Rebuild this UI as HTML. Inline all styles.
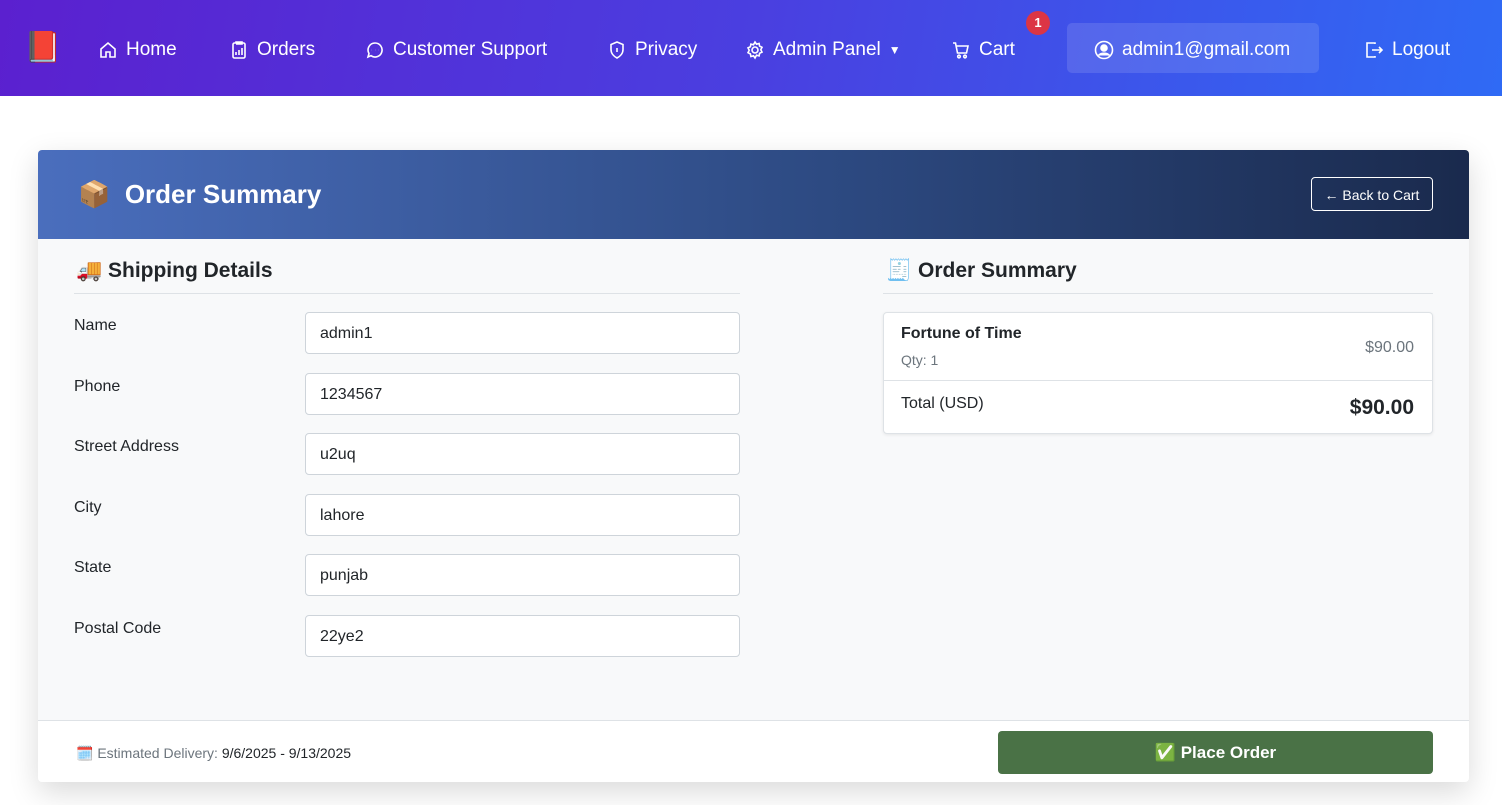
<!DOCTYPE html>
<html><head><meta charset="utf-8"><style>
*{box-sizing:border-box;margin:0;padding:0}
body{width:1502px;height:805px;overflow:hidden;background:#fff;font-family:"Liberation Sans",sans-serif;color:#212529;position:relative}
.nav{position:absolute;left:0;top:0;width:1502px;height:96px;background:linear-gradient(100deg,#5b20cf 0%,#4a3fe0 50%,#2f6af5 100%);color:#fff}
.ni{position:absolute;top:39px;font-size:19px;display:flex;align-items:center;gap:8px;white-space:nowrap}
.ni svg{width:20px;height:20px;fill:none;stroke:#fff;stroke-width:1.6}
.badge{position:absolute;left:1026px;top:11px;width:24px;height:24px;border-radius:12px;background:#dc3545;color:#fff;font-size:13px;font-weight:bold;text-align:center;line-height:24px}
.user{position:absolute;left:1067px;top:23px;width:252px;height:50px;border-radius:5px;background:rgba(255,255,255,.12)}
.card{position:absolute;left:38px;top:150px;width:1431px;height:632px;background:#f8f9fa;border-radius:4px;box-shadow:0 10px 30px rgba(0,0,0,.15);overflow:hidden}
.hd{position:absolute;left:0;top:0;width:1431px;height:89px;background:linear-gradient(90deg,#4a6ebd 0%,#2d4a82 55%,#1a2a4d 100%)}
.hd h1{position:absolute;left:40px;top:29px;font-size:26px;color:#fff;font-weight:bold}
.back{position:absolute;left:1273px;top:27px;width:122px;height:34px;border:1px solid #fff;border-radius:4px;color:#fff;font-size:14px;text-align:center;line-height:34px}
h2{position:absolute;font-size:21px;font-weight:bold;color:#212529}
.hr{position:absolute;height:1px;background:#dee2e6}
.lbl{position:absolute;left:36px;font-size:16px}
.in{position:absolute;left:267px;width:435px;height:42px;background:#fff;border:1px solid #ced4da;border-radius:4px;font-size:16px;padding:12px 14px}
.box{position:absolute;left:845px;top:162px;width:550px;height:122px;background:#fff;border:1px solid #dee2e6;border-radius:4px;box-shadow:0 1px 3px rgba(0,0,0,.08)}
.ft{position:absolute;left:0;top:570px;width:1431px;height:62px;background:#fff;border-top:1px solid #dee2e6}
.po{position:absolute;left:960px;top:10px;width:435px;height:43px;background:#4a7246;border-radius:4px;color:#fff;font-weight:bold;font-size:17px;text-align:center;line-height:43px}
</style></head><body>
<div class="nav">
<div class="ni" style="left:24px;top:30px;font-size:30px">📕</div>
<div class="ni" style="left:98px"><svg viewBox="0 0 20 20"><path d="M3 9L10 3l7 6v8h-5v-5H8v5H3z"/></svg>Home</div>
<div class="ni" style="left:229px"><svg viewBox="0 0 20 20"><rect x="4" y="3" width="12" height="15" rx="1.5"/><path d="M7 3V2h6v2H7M7 15v-3M10 15v-5M13 15V8"/></svg>Orders</div>
<div class="ni" style="left:365px"><svg viewBox="0 0 20 20"><path d="M10 3a7 7 0 1 1-4 12.7L3 17l1-3.5A7 7 0 0 1 10 3z"/><path d="M6.5 10h.1M10 10h.1M13.5 10h.1" stroke-width="2.2"/></svg>Customer Support</div>
<div class="ni" style="left:607px"><svg viewBox="0 0 20 20"><path d="M10 2l6 2.5v5c0 4-3 7-6 8.5-3-1.5-6-4.5-6-8.5v-5z"/><path d="M10 8v4"/></svg>Privacy</div>
<div class="ni" style="left:745px"><svg viewBox="0 0 20 20"><circle cx="10" cy="10" r="3"/><path d="M10 2l1.5 2.2 2.6-.7.5 2.6 2.4 1.2-1.2 2.4 1.2 2.4-2.4 1.2-.5 2.6-2.6-.7L10 18l-1.5-2.2-2.6.7-.5-2.6L3 12.7l1.2-2.4L3 7.9l2.4-1.2.5-2.6 2.6.7z"/></svg>Admin Panel <span style="font-size:12px">▼</span></div>
<div class="ni" style="left:951px"><svg viewBox="0 0 20 20"><path d="M2 3h2.5l2 10h9l1.5-7H5.5"/><circle cx="8" cy="16.5" r="1.3"/><circle cx="14" cy="16.5" r="1.3"/></svg>Cart</div>
<div class="badge">1</div>
<div class="user"></div>
<div class="ni" style="left:1094px"><svg viewBox="0 0 20 20"><circle cx="10" cy="10" r="8.5"/><circle cx="10" cy="8" r="3" fill="#fff"/><path d="M4.5 15.5c2-3 9-3 11 0" fill="#fff"/></svg>admin1@gmail.com</div>
<div class="ni" style="left:1364px"><svg viewBox="0 0 20 20"><path d="M11 4V3H3v14h8v-1M8 10h10M15 7l3 3-3 3"/></svg>Logout</div>
</div>
<div class="card">
<div class="hd"><h1>📦&nbsp; Order Summary</h1><div class="back">← Back to Cart</div></div>
<h2 style="left:38px;top:109px">🚚 Shipping Details</h2>
<div class="hr" style="left:36px;top:143px;width:666px"></div>
<h2 style="left:848px;top:109px">🧾 Order Summary</h2>
<div class="hr" style="left:845px;top:143px;width:550px"></div>
<div class="lbl" style="top:167px">Name</div><div class="in" style="top:162px">admin1</div>
<div class="lbl" style="top:228px">Phone</div><div class="in" style="top:223px">1234567</div>
<div class="lbl" style="top:288px">Street Address</div><div class="in" style="top:283px">u2uq</div>
<div class="lbl" style="top:349px">City</div><div class="in" style="top:344px">lahore</div>
<div class="lbl" style="top:409px">State</div><div class="in" style="top:404px">punjab</div>
<div class="lbl" style="top:470px">Postal Code</div><div class="in" style="top:465px">22ye2</div>
<div class="box">
<div style="position:absolute;left:17px;top:12px;font-weight:bold;font-size:16px">Fortune of Time</div>
<div style="position:absolute;left:17px;top:39px;font-size:14px;color:#6c757d">Qty: 1</div>
<div style="position:absolute;right:18px;top:26px;font-size:16px;color:#6c757d">$90.00</div>
<div style="position:absolute;left:0;top:67px;width:548px;height:1px;background:#dee2e6"></div>
<div style="position:absolute;left:17px;top:82px;font-size:16px">Total (USD)</div>
<div style="position:absolute;right:18px;top:83px;font-size:21px;font-weight:bold">$90.00</div>
</div>
<div class="ft">
<div style="position:absolute;left:38px;top:24px;font-size:14px;color:#6c757d">🗓️ Estimated Delivery: <span style="color:#212529">9/6/2025 - 9/13/2025</span></div>
<div class="po">✅ Place Order</div>
</div>
</div>
</body></html>
